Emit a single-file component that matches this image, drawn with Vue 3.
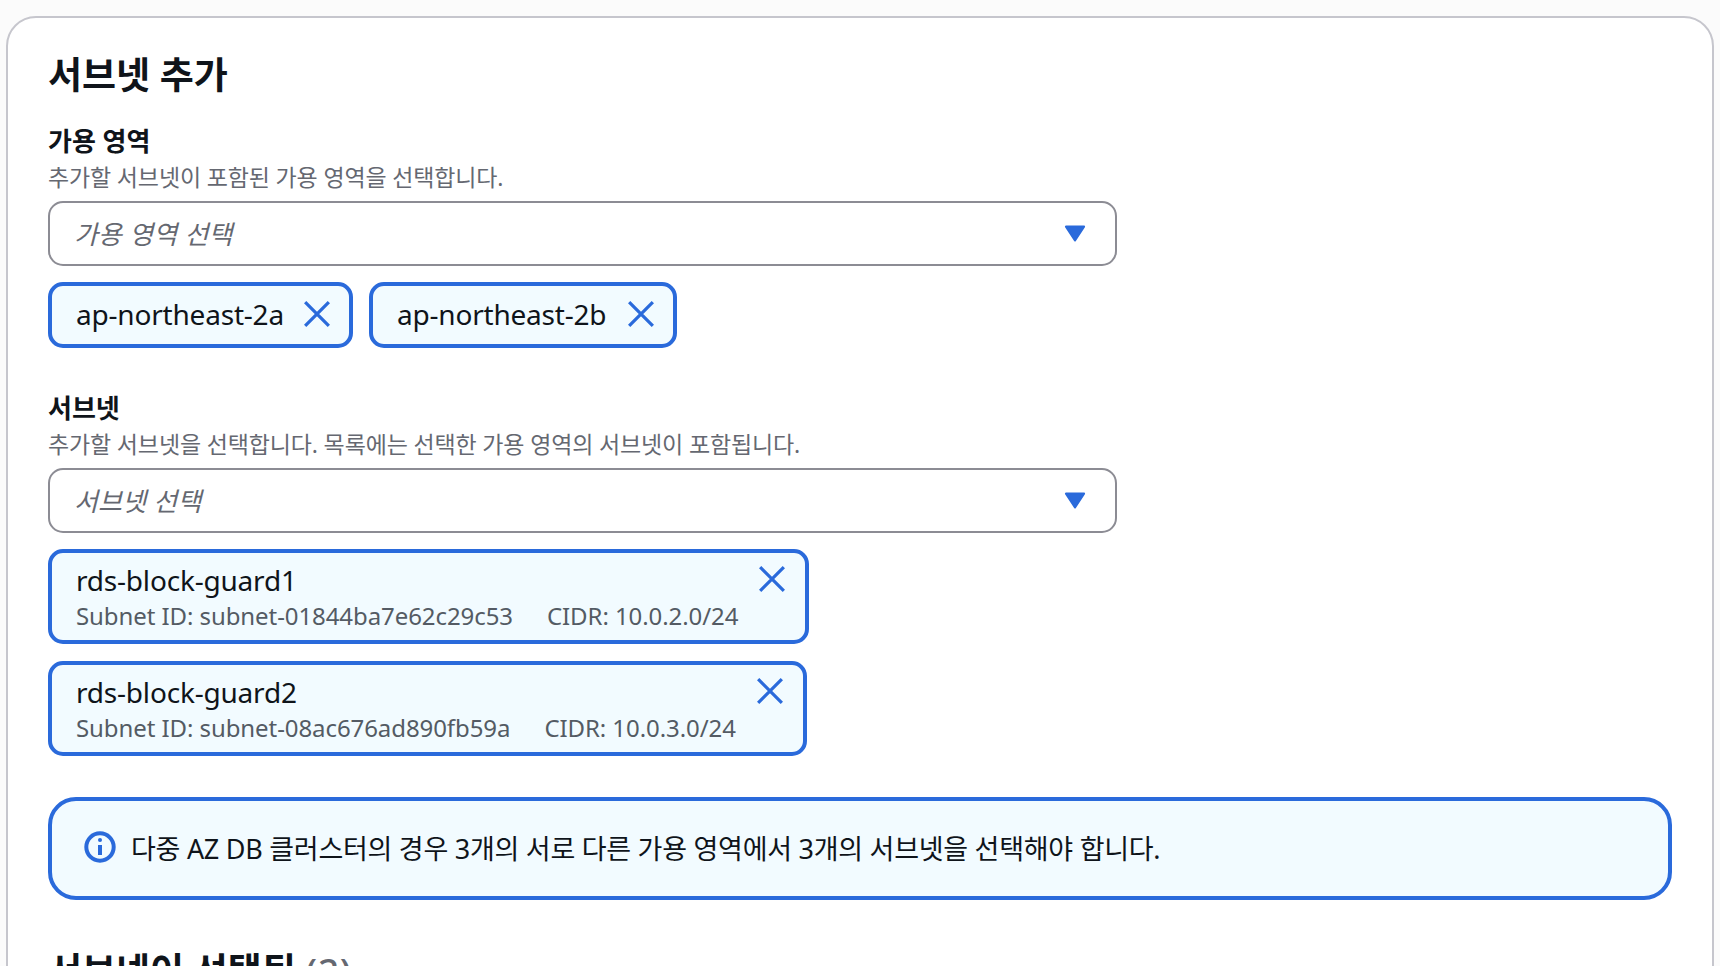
<template>
  <div class="page">
    <section class="card">
      <h2 class="title">서브넷 추가</h2>

      <div class="field">
        <div class="label">가용 영역</div>
        <div class="desc">추가할 서브넷이 포함된 가용 영역을 선택합니다.</div>
        <div class="select">
          <span class="placeholder">가용 영역 선택</span>
          <svg class="caret" viewBox="0 0 20 16"><path d="M1.5 1.5h17L10 14.5z" /></svg>
        </div>
        <div class="chips">
          <div v-for="zone in zones" :key="zone" class="chip">
            <span>{{ zone }}</span>
            <svg class="close" viewBox="0 0 26 26"><path d="M2 2l22 22M24 2L2 24" /></svg>
          </div>
        </div>
      </div>

      <div class="field subnets">
        <div class="label">서브넷</div>
        <div class="desc">추가할 서브넷을 선택합니다. 목록에는 선택한 가용 영역의 서브넷이 포함됩니다.</div>
        <div class="select">
          <span class="placeholder">서브넷 선택</span>
          <svg class="caret" viewBox="0 0 20 16"><path d="M1.5 1.5h17L10 14.5z" /></svg>
        </div>
        <div class="tokens">
          <div v-for="s in subnets" :key="s.name" class="token">
            <div class="token-body">
              <div class="token-name">{{ s.name }}</div>
              <div class="token-meta">
                <span>Subnet ID: {{ s.id }}</span>
                <span>CIDR: {{ s.cidr }}</span>
              </div>
            </div>
            <svg class="close" viewBox="0 0 26 26"><path d="M2 2l22 22M24 2L2 24" /></svg>
          </div>
        </div>
      </div>

      <div class="alert">
        <svg class="info" viewBox="0 0 32 32">
          <circle cx="16" cy="16" r="13.7" />
          <path d="M16 14v10" />
          <circle class="dot" cx="16" cy="9" r="2" />
        </svg>
        <span>다중 AZ DB 클러스터의 경우 3개의 서로 다른 가용 영역에서 3개의 서브넷을 선택해야 합니다.</span>
      </div>

      <h2 class="title selected">서브넷이 선택됨 <span class="count">(2)</span></h2>
    </section>
  </div>
</template>

<script setup>
const zones = ['ap-northeast-2a', 'ap-northeast-2b']
const subnets = [
  { name: 'rds-block-guard1', id: 'subnet-01844ba7e62c29c53', cidr: '10.0.2.0/24' },
  { name: 'rds-block-guard2', id: 'subnet-08ac676ad890fb59a', cidr: '10.0.3.0/24' },
]
</script>

<style>
html, body { margin: 0; background: #fbfbfb; }
</style>

<style scoped>
.page {
  height: 966px;
  overflow: hidden;
  box-sizing: border-box;
  padding: 16px 6px 0 6px;
  font-family: "Noto Sans", "Noto Sans CJK KR", sans-serif;
  color: #0f141a;
}
.card {
  background: #fff;
  border: 2px solid #c6c6cd;
  border-radius: 30px;
  padding: 0 40px;
  height: 1200px;
}
.title {
  margin: 0;
  padding-top: 32px;
  font-size: 37px;
  line-height: 50px;
  font-weight: 700;
}
.field { margin-top: 23px; }
.label {
  font-size: 26px;
  line-height: 36px;
  font-weight: 700;
}
.desc {
  font-size: 23px;
  line-height: 36px;
  color: #656871;
  letter-spacing: -0.15px;
}
.select {
  display: flex;
  align-items: center;
  justify-content: space-between;
  box-sizing: border-box;
  width: 1069px;
  height: 65px;
  margin-top: 6px;
  padding: 0 29px 2px 24px;
  border: 2px solid #8c8c94;
  border-radius: 15px;
}
.placeholder {
  font-size: 26px;
  font-style: italic;
  color: #656871;
  letter-spacing: 0.2px;
}
.caret { width: 22px; height: 17px; margin-top: 2px; }
.caret path { fill: #2a6adb; stroke: #2a6adb; stroke-width: 2; stroke-linejoin: round; }
.chips {
  display: flex;
  gap: 16px;
  margin-top: 16px;
}
.chip {
  display: flex;
  align-items: center;
  gap: 19px;
  box-sizing: border-box;
  height: 66px;
  padding: 0 18px 3px 24px;
  border: 4px solid #2a6adb;
  border-radius: 15px;
  background: #f2fbff;
  font-size: 28px;
  letter-spacing: -0.2px;
}
.chip:last-child { gap: 21px; }
.close { width: 28px; height: 28px; flex: none; }
.close path { fill: none; stroke: #2a6adb; stroke-width: 3; }
.subnets { margin-top: 42px; }
.tokens {
  display: flex;
  flex-direction: column;
  align-items: flex-start;
  gap: 17px;
  margin-top: 16px;
}
.token {
  display: flex;
  align-items: flex-start;
  gap: 20px;
  box-sizing: border-box;
  height: 95px;
  padding: 8px 19px 0 24px;
  border: 4px solid #2a6adb;
  border-radius: 15px;
  background: #f2fbff;
}
.token .close { margin-top: 4px; }
.token-name {
  font-size: 28px;
  line-height: 38px;
  letter-spacing: -0.2px;
}
.token-meta {
  display: flex;
  gap: 34px;
  font-size: 24px;
  line-height: 34px;
  color: #545b64;
  letter-spacing: -0.08px;
}
.alert {
  display: flex;
  align-items: center;
  gap: 15px;
  box-sizing: border-box;
  height: 103px;
  margin-top: 41px;
  padding: 0 32px 3px;
  border: 4px solid #2a6adb;
  border-radius: 28px;
  background: #f2fbff;
  font-size: 27px;
  letter-spacing: -0.27px;
}
.info { width: 32px; height: 32px; flex: none; }
.info circle { fill: none; stroke: #2a6adb; stroke-width: 4; }
.info path { fill: none; stroke: #2a6adb; stroke-width: 4; }
.info .dot { fill: #2a6adb; stroke: none; }
.selected { padding-top: 46px; }
.count { font-weight: 500; color: #656871; letter-spacing: 0.8px; }
</style>
